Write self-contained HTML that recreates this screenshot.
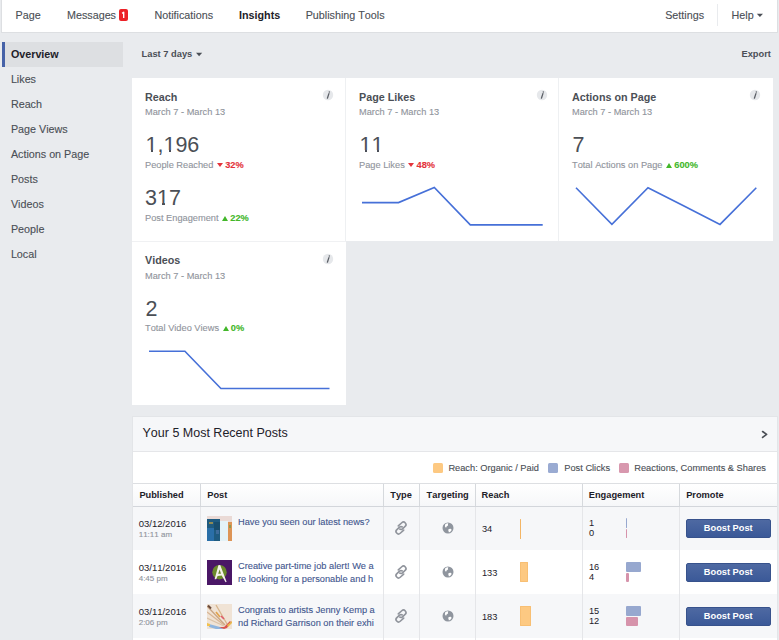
<!DOCTYPE html><html><head><meta charset="utf-8"><style>
*{margin:0;padding:0;box-sizing:border-box}
html,body{width:779px;height:640px;overflow:hidden;background:#e9ebee;font-family:"Liberation Sans",sans-serif;font-kerning:none}
.t{position:absolute;white-space:nowrap}
.s{-webkit-text-stroke:0.12px currentColor}
.r{position:absolute}
.t b{font-weight:700}
.arr{display:inline-block;width:0;height:0;border-left:3.9px solid transparent;border-right:3.9px solid transparent;vertical-align:baseline;margin:0 2.3px 0 0.9px}
.arr.dn{border-top:4.4px solid #e4333b;position:relative;top:-0.9px}
.arr.up{border-bottom:5px solid #42b72a;position:relative;top:0px}
.info{width:10.4px;height:10.4px;border-radius:50%;background:#e9ebee;text-align:center}
.info span{position:absolute;left:0;top:0;width:10.4px;height:10.4px;font:italic 700 8px/10.4px "Liberation Serif",serif;color:#4b4f56;text-align:center}
.thumb{width:25px;height:25px}
.th0{background:linear-gradient(90deg,#2f6ea0 0 45%,#c9d8de 45% 75%,#d59a52 75% 100%)}
.th1{background:#4f2a6e}
.th2{background:linear-gradient(135deg,#efe3d2,#e6d3bd 60%,#d27a5c)}
.globe{width:11px;height:11px;border-radius:50%;background:#90949c}
.btn{width:84.5px;height:18.5px;background:linear-gradient(#4e69a2,#3b5998);border:1px solid #37528c;border-radius:2px;color:#fff;font-weight:700;font-size:9.25px;line-height:16.5px;text-align:center}
</style></head><body>
<div class="r" style="left:1px;top:-1px;width:777px;height:34px;background:#fff;border:1px solid #dddfe2;"></div>
<div class="t s" style="left:15.50px;top:8.53px;font-size:10.75px;line-height:12.9px;color:#4b4f56;font-weight:400;">Page</div>
<div class="t s" style="left:67.00px;top:8.53px;font-size:10.75px;line-height:12.9px;color:#4b4f56;font-weight:400;">Messages</div>
<div class="r" style="left:119px;top:9px;width:9px;height:12px;background:#ec2127;border-radius:2px;"></div>
<svg class="r" style="left:119px;top:9px" width="9" height="12"><path d="M3.1 4.4 L4.7 3.2 L4.7 9.0" fill="none" stroke="#fff" stroke-width="1.35" stroke-linejoin="round"/></svg>
<div class="t s" style="left:154.50px;top:8.53px;font-size:10.75px;line-height:12.9px;color:#4b4f56;font-weight:400;">Notifications</div>
<div class="t" style="left:239.00px;top:8.53px;font-size:10.75px;line-height:12.9px;color:#1d2129;font-weight:700;">Insights</div>
<div class="t s" style="left:305.70px;top:8.53px;font-size:10.75px;line-height:12.9px;color:#4b4f56;font-weight:400;">Publishing Tools</div>
<div class="t s" style="left:665.20px;top:8.53px;font-size:10.75px;line-height:12.9px;color:#4b4f56;font-weight:400;">Settings</div>
<div class="r" style="left:717px;top:4px;width:1px;height:22px;background:#e9ebee;"></div>
<div class="t s" style="left:731.50px;top:8.53px;font-size:10.75px;line-height:12.9px;color:#4b4f56;font-weight:400;">Help</div>
<svg class="r" style="left:756px;top:13px" width="8" height="5"><path d="M0.8 0.8 L7 0.8 L3.9 4 Z" fill="#4b4f56"/></svg>
<div class="r" style="left:1.5px;top:42px;width:3.5px;height:25px;background:#4662a8;"></div>
<div class="r" style="left:5px;top:42px;width:118px;height:25px;background:#dddfe2;"></div>
<div class="t" style="left:10.90px;top:48.23px;font-size:10.75px;line-height:12.9px;color:#1d2129;font-weight:700;">Overview</div>
<div class="t s" style="left:10.90px;top:73.23px;font-size:10.75px;line-height:12.9px;color:#4b4f56;font-weight:400;">Likes</div>
<div class="t s" style="left:10.90px;top:98.23px;font-size:10.75px;line-height:12.9px;color:#4b4f56;font-weight:400;">Reach</div>
<div class="t s" style="left:10.90px;top:123.23px;font-size:10.75px;line-height:12.9px;color:#4b4f56;font-weight:400;">Page Views</div>
<div class="t s" style="left:10.90px;top:148.23px;font-size:10.75px;line-height:12.9px;color:#4b4f56;font-weight:400;">Actions on Page</div>
<div class="t s" style="left:10.90px;top:173.23px;font-size:10.75px;line-height:12.9px;color:#4b4f56;font-weight:400;">Posts</div>
<div class="t s" style="left:10.90px;top:198.23px;font-size:10.75px;line-height:12.9px;color:#4b4f56;font-weight:400;">Videos</div>
<div class="t s" style="left:10.90px;top:223.23px;font-size:10.75px;line-height:12.9px;color:#4b4f56;font-weight:400;">People</div>
<div class="t s" style="left:10.90px;top:248.23px;font-size:10.75px;line-height:12.9px;color:#4b4f56;font-weight:400;">Local</div>
<div class="t" style="left:141.60px;top:48.80px;font-size:9.3px;line-height:11.16px;color:#4b4f56;font-weight:700;">Last 7 days</div>
<svg class="r" style="left:196px;top:52px" width="7" height="5"><path d="M0 0.8 L6.2 0.8 L3.1 4.3 Z" fill="#4b4f56"/></svg>
<div class="t" style="left:741.50px;top:48.70px;font-size:9.3px;line-height:11.16px;color:#4b4f56;font-weight:700;">Export</div>
<div class="r" style="left:132px;top:78px;width:641px;height:163px;background:#eef0f2;"></div>
<div class="r" style="left:132px;top:78px;width:213px;height:163px;background:#fff;"></div>
<div class="r" style="left:346px;top:78px;width:212px;height:163px;background:#fff;"></div>
<div class="r" style="left:559px;top:78px;width:214px;height:163px;background:#fff;"></div>
<div class="r" style="left:132px;top:242px;width:214px;height:163px;background:#fff;"></div>
<div class="r" style="left:132px;top:241px;width:214px;height:1px;background:#f0f1f3;"></div>
<div class="t" style="left:145.00px;top:90.83px;font-size:10.75px;line-height:12.9px;color:#4b4f56;font-weight:700;">Reach</div>
<div class="t s" style="left:145.00px;top:107.14px;font-size:9.25px;line-height:11.1px;color:#90949c;font-weight:400;">March 7 - March 13</div>
<div class="t" style="left:145.50px;top:133.25px;font-size:21.5px;line-height:25.8px;color:#4b4f56;font-weight:400;">1,196</div>
<div class="t s" style="left:145.00px;top:159.64px;font-size:9.25px;line-height:11.1px;color:#90949c;font-weight:400;">People Reached <span class="arr dn"></span><b style="color:#e4333b">32%</b></div>
<div class="t" style="left:145.00px;top:186.05px;font-size:21.5px;line-height:25.8px;color:#4b4f56;font-weight:400;">317</div>
<div class="t s" style="left:145.00px;top:212.64px;font-size:9.25px;line-height:11.1px;color:#90949c;font-weight:400;">Post Engagement <span class="arr up"></span><b style="color:#42b72a">22%</b></div>
<svg class="r" style="left:322.2px;top:89.3px" width="12" height="12" viewBox="0 0 12 12"><circle cx="6" cy="6" r="5.2" fill="#e6e8eb"/><path d="M6.9 4.6 L5.4 9.2" stroke="#5b5f66" stroke-width="1.3" stroke-linecap="round"/><circle cx="7.3" cy="3.0" r="0.75" fill="#5b5f66"/></svg>
<div class="t" style="left:359.00px;top:90.83px;font-size:10.75px;line-height:12.9px;color:#4b4f56;font-weight:700;">Page Likes</div>
<div class="t s" style="left:359.00px;top:107.14px;font-size:9.25px;line-height:11.1px;color:#90949c;font-weight:400;">March 7 - March 13</div>
<div class="t" style="left:359.50px;top:133.25px;font-size:21.5px;line-height:25.8px;color:#4b4f56;font-weight:400;">11</div>
<div class="t s" style="left:359.00px;top:159.64px;font-size:9.25px;line-height:11.1px;color:#90949c;font-weight:400;">Page Likes <span class="arr dn"></span><b style="color:#e4333b">48%</b></div>
<svg class="r" style="left:536.0px;top:89.3px" width="12" height="12" viewBox="0 0 12 12"><circle cx="6" cy="6" r="5.2" fill="#e6e8eb"/><path d="M6.9 4.6 L5.4 9.2" stroke="#5b5f66" stroke-width="1.3" stroke-linecap="round"/><circle cx="7.3" cy="3.0" r="0.75" fill="#5b5f66"/></svg>
<div class="t" style="left:572.00px;top:90.83px;font-size:10.75px;line-height:12.9px;color:#4b4f56;font-weight:700;">Actions on Page</div>
<div class="t s" style="left:572.00px;top:107.14px;font-size:9.25px;line-height:11.1px;color:#90949c;font-weight:400;">March 7 - March 13</div>
<div class="t" style="left:572.50px;top:133.25px;font-size:21.5px;line-height:25.8px;color:#4b4f56;font-weight:400;">7</div>
<div class="t s" style="left:572.00px;top:159.64px;font-size:9.25px;line-height:11.1px;color:#90949c;font-weight:400;">Total Actions on Page <span class="arr up"></span><b style="color:#42b72a">600%</b></div>
<svg class="r" style="left:748.8px;top:89.3px" width="12" height="12" viewBox="0 0 12 12"><circle cx="6" cy="6" r="5.2" fill="#e6e8eb"/><path d="M6.9 4.6 L5.4 9.2" stroke="#5b5f66" stroke-width="1.3" stroke-linecap="round"/><circle cx="7.3" cy="3.0" r="0.75" fill="#5b5f66"/></svg>
<div class="t" style="left:145.00px;top:254.33px;font-size:10.75px;line-height:12.9px;color:#4b4f56;font-weight:700;">Videos</div>
<div class="t s" style="left:145.00px;top:270.64px;font-size:9.25px;line-height:11.1px;color:#90949c;font-weight:400;">March 7 - March 13</div>
<div class="t" style="left:145.50px;top:296.75px;font-size:21.5px;line-height:25.8px;color:#4b4f56;font-weight:400;">2</div>
<div class="t s" style="left:145.00px;top:323.14px;font-size:9.25px;line-height:11.1px;color:#90949c;font-weight:400;">Total Video Views <span class="arr up"></span><b style="color:#42b72a">0%</b></div>
<svg class="r" style="left:322.2px;top:252.8px" width="12" height="12" viewBox="0 0 12 12"><circle cx="6" cy="6" r="5.2" fill="#e6e8eb"/><path d="M6.9 4.6 L5.4 9.2" stroke="#5b5f66" stroke-width="1.3" stroke-linecap="round"/><circle cx="7.3" cy="3.0" r="0.75" fill="#5b5f66"/></svg>
<div class="r" style="left:146px;top:150px;width:5px;height:2px;background:#fff;"></div>
<div class="r" style="left:153px;top:150px;width:5px;height:2px;background:#fff;"></div>
<div class="r" style="left:164px;top:150px;width:5px;height:2px;background:#fff;"></div>
<div class="r" style="left:171px;top:150px;width:5px;height:2px;background:#fff;"></div>
<div class="r" style="left:360px;top:150px;width:5px;height:2px;background:#fff;"></div>
<div class="r" style="left:367px;top:150px;width:5px;height:2px;background:#fff;"></div>
<div class="r" style="left:372px;top:150px;width:5px;height:2px;background:#fff;"></div>
<div class="r" style="left:379px;top:150px;width:5px;height:2px;background:#fff;"></div>
<div class="r" style="left:157px;top:203px;width:5px;height:2px;background:#fff;"></div>
<div class="r" style="left:165px;top:203px;width:5px;height:2px;background:#fff;"></div>
<svg class="r" style="left:0;top:0" width="779" height="640"><g fill="none" stroke="#4670d8" stroke-width="1.6" stroke-linejoin="miter"><polyline points="362,202.6 398.5,202.6 434.3,187.4 470.3,224.9 542.7,224.9"/><polyline points="576,187.7 611.9,224.4 648,187.7 684,206 720,224.4 756.3,187.7"/><polyline points="149,351.2 184.9,351.2 220.9,388.5 329.5,388.5"/></g></svg>
<div class="r" style="left:132px;top:416px;width:646px;height:260px;background:#fff;border:1px solid #e3e5e8;"></div>
<div class="r" style="left:133px;top:417px;width:644px;height:35px;background:#f6f7f9;border-bottom:1px solid #e5e6e9;"></div>
<div class="t" style="left:142.50px;top:426.07px;font-size:12.5px;line-height:15.0px;color:#1d2129;font-weight:400;">Your 5 Most Recent Posts</div>
<svg class="r" style="left:760px;top:429px" width="10" height="11"><path d="M2.6 2.5 L6.6 5.4 L2.6 8.4" fill="none" stroke="#4b4f56" stroke-width="1.65" stroke-linecap="round" stroke-linejoin="round"/></svg>
<div class="r" style="left:433px;top:463px;width:10px;height:10px;background:#fdc982;border-radius:1.5px;"></div>
<div class="t s" style="left:448.40px;top:462.54px;font-size:9.25px;line-height:11.1px;color:#4b4f56;font-weight:400;">Reach: Organic / Paid</div>
<div class="r" style="left:548.4px;top:463px;width:10px;height:10px;background:#9aabd2;border-radius:1.5px;"></div>
<div class="t s" style="left:564.30px;top:462.54px;font-size:9.25px;line-height:11.1px;color:#4b4f56;font-weight:400;">Post Clicks</div>
<div class="r" style="left:619.2px;top:463px;width:10px;height:10px;background:#d898ae;border-radius:1.5px;"></div>
<div class="t s" style="left:634.30px;top:462.54px;font-size:9.25px;line-height:11.1px;color:#4b4f56;font-weight:400;">Reactions, Comments &amp; Shares</div>
<div class="r" style="left:133px;top:483px;width:644px;height:24px;background:linear-gradient(#fff,#f6f7f9);border-top:1px solid #dddfe2;border-bottom:1px solid #d3d6db;"></div>
<div class="t" style="left:139.40px;top:490.14px;font-size:9.25px;line-height:11.1px;color:#1d2129;font-weight:700;">Published</div>
<div class="t" style="left:207.30px;top:490.14px;font-size:9.25px;line-height:11.1px;color:#1d2129;font-weight:700;">Post</div>
<div class="t" style="left:390.30px;top:490.14px;font-size:9.25px;line-height:11.1px;color:#1d2129;font-weight:700;">Type</div>
<div class="t" style="left:426.60px;top:490.14px;font-size:9.25px;line-height:11.1px;color:#1d2129;font-weight:700;">Targeting</div>
<div class="t" style="left:481.60px;top:490.14px;font-size:9.25px;line-height:11.1px;color:#1d2129;font-weight:700;">Reach</div>
<div class="t" style="left:588.80px;top:490.14px;font-size:9.25px;line-height:11.1px;color:#1d2129;font-weight:700;">Engagement</div>
<div class="t" style="left:686.20px;top:490.14px;font-size:9.25px;line-height:11.1px;color:#1d2129;font-weight:700;">Promote</div>
<div class="r" style="left:133px;top:507px;width:644px;height:43px;background:#f6f7f9;"></div>
<div class="r" style="left:133px;top:550px;width:644px;height:44px;background:#fff;"></div>
<div class="r" style="left:133px;top:594px;width:644px;height:44px;background:#f6f7f9;"></div>
<div class="r" style="left:200px;top:484px;width:1px;height:22px;background:#d6d9dd;"></div>
<div class="r" style="left:200px;top:507px;width:1px;height:133px;background:#e5e6e9;"></div>
<div class="r" style="left:383px;top:484px;width:1px;height:22px;background:#d6d9dd;"></div>
<div class="r" style="left:383px;top:507px;width:1px;height:133px;background:#e5e6e9;"></div>
<div class="r" style="left:419px;top:484px;width:1px;height:22px;background:#d6d9dd;"></div>
<div class="r" style="left:419px;top:507px;width:1px;height:133px;background:#e5e6e9;"></div>
<div class="r" style="left:475px;top:484px;width:1px;height:22px;background:#d6d9dd;"></div>
<div class="r" style="left:475px;top:507px;width:1px;height:133px;background:#e5e6e9;"></div>
<div class="r" style="left:582px;top:484px;width:1px;height:22px;background:#d6d9dd;"></div>
<div class="r" style="left:582px;top:507px;width:1px;height:133px;background:#e5e6e9;"></div>
<div class="r" style="left:679px;top:484px;width:1px;height:22px;background:#d6d9dd;"></div>
<div class="r" style="left:679px;top:507px;width:1px;height:133px;background:#e5e6e9;"></div>
<div class="t" style="left:138.70px;top:517.81px;font-size:9.5px;line-height:11.4px;color:#1d2129;font-weight:400;">03/12/2016</div>
<div class="t s" style="left:138.70px;top:529.93px;font-size:8.0px;line-height:9.6px;color:#90949c;font-weight:400;">11:11 am</div>
<svg class="r" style="left:207px;top:516.0px" width="25" height="25" viewBox="0 0 25 25"><rect width="25" height="25" fill="#eadad6"/><rect x="0" y="3" width="13" height="22" fill="#1f5b80"/><rect x="0" y="12" width="7" height="13" fill="#2a6fa8"/><rect x="7" y="6" width="6" height="8" fill="#184e6e"/><rect x="2" y="6" width="4" height="2" fill="#8f8a55"/><rect x="9" y="14" width="3" height="4" fill="#3d6b9a"/><rect x="13" y="5" width="8" height="20" fill="#e4f2f8"/><rect x="21" y="6" width="4" height="19" fill="#dd9456"/><rect x="22" y="9" width="2" height="3" fill="#8f9b52"/></svg>
<div class="t s" style="left:238.00px;top:517.44px;font-size:9.25px;line-height:11.1px;color:#43578f;font-weight:400;">Have you seen our latest news?</div>
<svg class="r" style="left:392px;top:519.2px" width="18" height="18" viewBox="0 0 18 18"><g fill="none" stroke="#90949c" stroke-width="1.6" stroke-linecap="round" transform="rotate(-42 9 9)"><path d="M9.6 12.4 H4.9 A2.5 2.5 0 0 1 4.9 7.4 H8.4 A2.5 2.5 0 0 1 10.7 9.1"/><path d="M8.4 5.6 H13.1 A2.5 2.5 0 0 1 13.1 10.6 H9.6 A2.5 2.5 0 0 1 7.3 8.9"/></g></svg>
<svg class="r" style="left:441.5px;top:522.4px" width="12" height="12" viewBox="0 0 12 12"><circle cx="6" cy="6" r="5.5" fill="#8f959e"/><path d="M3.2 2.2 Q4.6 1.2 6.3 1.3 L5.9 2.6 Q6.6 3.2 5.4 3.9 L4.6 4.6 L4.1 5.8 Q3.3 5.3 2.9 4.2 Z" fill="#fff"/><path d="M6.6 7.1 L8.9 6.8 Q9.8 7.4 9.4 8.6 Q8.4 10.2 6.9 10.6 Q6.8 9.6 6.3 8.8 Z" fill="#fff"/></svg>
<div class="t" style="left:481.90px;top:523.74px;font-size:9.25px;line-height:11.1px;color:#1d2129;font-weight:400;">34</div>
<div class="r" style="left:519.8px;top:518.5px;width:1.6px;height:20px;background:#fdc982;border-radius:1px;box-shadow:inset 0 0 0 0.5px #f3b565;"></div>
<div class="t" style="left:588.90px;top:518.04px;font-size:9.25px;line-height:11.1px;color:#1d2129;font-weight:400;">1</div>
<div class="t" style="left:588.90px;top:528.44px;font-size:9.25px;line-height:11.1px;color:#1d2129;font-weight:400;">0</div>
<div class="r" style="left:626px;top:518.4px;width:1px;height:9.4px;background:#97a8cf;border-radius:1px;"></div>
<div class="r" style="left:626px;top:529.0px;width:1px;height:9.4px;background:#d693ab;border-radius:1px;"></div>
<div class="r btn" style="left:686px;top:519.3px">Boost Post</div>
<div class="t" style="left:138.70px;top:561.71px;font-size:9.5px;line-height:11.4px;color:#1d2129;font-weight:400;">03/11/2016</div>
<div class="t s" style="left:138.70px;top:573.83px;font-size:8.0px;line-height:9.6px;color:#90949c;font-weight:400;">4:45 pm</div>
<svg class="r" style="left:207px;top:559.9px" width="25" height="25" viewBox="0 0 25 25"><rect width="25" height="25" fill="#4a1766"/><circle cx="12.5" cy="12.2" r="7.2" fill="#6b8a2b"/><path d="M11.4 5.2 L13.2 4.9 L19.6 21.7 L18.6 22.2 L14.7 15.6 L10.6 15.9 L9.2 19.3 L7.6 19.3 Z M11.2 13.8 L14 13.7 L12.6 9.6 Z" fill="#f4f1ea"/></svg>
<div class="t s" style="left:238.00px;top:560.84px;font-size:9.25px;line-height:11.1px;color:#43578f;font-weight:400;">Creative part-time job alert! We a</div>
<div class="t s" style="left:238.00px;top:574.04px;font-size:9.25px;line-height:11.1px;color:#43578f;font-weight:400;">re looking for a personable and h</div>
<svg class="r" style="left:392px;top:563.1px" width="18" height="18" viewBox="0 0 18 18"><g fill="none" stroke="#90949c" stroke-width="1.6" stroke-linecap="round" transform="rotate(-42 9 9)"><path d="M9.6 12.4 H4.9 A2.5 2.5 0 0 1 4.9 7.4 H8.4 A2.5 2.5 0 0 1 10.7 9.1"/><path d="M8.4 5.6 H13.1 A2.5 2.5 0 0 1 13.1 10.6 H9.6 A2.5 2.5 0 0 1 7.3 8.9"/></g></svg>
<svg class="r" style="left:441.5px;top:566.3px" width="12" height="12" viewBox="0 0 12 12"><circle cx="6" cy="6" r="5.5" fill="#8f959e"/><path d="M3.2 2.2 Q4.6 1.2 6.3 1.3 L5.9 2.6 Q6.6 3.2 5.4 3.9 L4.6 4.6 L4.1 5.8 Q3.3 5.3 2.9 4.2 Z" fill="#fff"/><path d="M6.6 7.1 L8.9 6.8 Q9.8 7.4 9.4 8.6 Q8.4 10.2 6.9 10.6 Q6.8 9.6 6.3 8.8 Z" fill="#fff"/></svg>
<div class="t" style="left:481.90px;top:567.64px;font-size:9.25px;line-height:11.1px;color:#1d2129;font-weight:400;">133</div>
<div class="r" style="left:519.8px;top:562.4px;width:8px;height:20px;background:#fdc982;border-radius:1px;box-shadow:inset 0 0 0 0.5px #f3b565;"></div>
<div class="t" style="left:588.90px;top:561.94px;font-size:9.25px;line-height:11.1px;color:#1d2129;font-weight:400;">16</div>
<div class="t" style="left:588.90px;top:572.34px;font-size:9.25px;line-height:11.1px;color:#1d2129;font-weight:400;">4</div>
<div class="r" style="left:626px;top:562.3px;width:15px;height:9.4px;background:#97a8cf;border-radius:1px;"></div>
<div class="r" style="left:626px;top:572.9px;width:2.8px;height:9.4px;background:#d693ab;border-radius:1px;"></div>
<div class="r btn" style="left:686px;top:563.2px">Boost Post</div>
<div class="t" style="left:138.70px;top:605.61px;font-size:9.5px;line-height:11.4px;color:#1d2129;font-weight:400;">03/11/2016</div>
<div class="t s" style="left:138.70px;top:617.73px;font-size:8.0px;line-height:9.6px;color:#90949c;font-weight:400;">2:06 pm</div>
<svg class="r" style="left:207px;top:603.8px" width="25" height="25" viewBox="0 0 25 25"><rect width="25" height="25" fill="#f0e3d5"/><g stroke-width="1.3" fill="none"><path d="M0 2 L18 21" stroke="#c9a585"/><path d="M0 8 L17 21" stroke="#d8b594"/><path d="M0 14 L17 22" stroke="#dcc3a8"/><path d="M9 1 L20 20" stroke="#d7b48b"/><path d="M1 1.5 L4 4.5" stroke="#6a4a3a" stroke-width="2"/><path d="M9 8 L13 13" stroke="#e2a24a" stroke-width="1.6"/><path d="M14 12 L17 15" stroke="#e05a6a" stroke-width="1.6"/></g><path d="M2 20 L13 23 L17 25 L9 25 L2 23 Z" fill="#8fb5de"/><path d="M12 23 L17 25 L20 24 L24 18 L23 17 L17 23 Z" fill="#d9534f"/><path d="M0 19 L3 20 L3 22 L0 22 Z" fill="#f2c14e"/><path d="M20 21 L25 17 L25 19 L21 23 Z" fill="#e8b84a"/></svg>
<div class="t s" style="left:238.00px;top:604.74px;font-size:9.25px;line-height:11.1px;color:#43578f;font-weight:400;">Congrats to artists Jenny Kemp a</div>
<div class="t s" style="left:238.00px;top:617.94px;font-size:9.25px;line-height:11.1px;color:#43578f;font-weight:400;">nd Richard Garrison on their exhi</div>
<svg class="r" style="left:392px;top:607.0px" width="18" height="18" viewBox="0 0 18 18"><g fill="none" stroke="#90949c" stroke-width="1.6" stroke-linecap="round" transform="rotate(-42 9 9)"><path d="M9.6 12.4 H4.9 A2.5 2.5 0 0 1 4.9 7.4 H8.4 A2.5 2.5 0 0 1 10.7 9.1"/><path d="M8.4 5.6 H13.1 A2.5 2.5 0 0 1 13.1 10.6 H9.6 A2.5 2.5 0 0 1 7.3 8.9"/></g></svg>
<svg class="r" style="left:441.5px;top:610.2px" width="12" height="12" viewBox="0 0 12 12"><circle cx="6" cy="6" r="5.5" fill="#8f959e"/><path d="M3.2 2.2 Q4.6 1.2 6.3 1.3 L5.9 2.6 Q6.6 3.2 5.4 3.9 L4.6 4.6 L4.1 5.8 Q3.3 5.3 2.9 4.2 Z" fill="#fff"/><path d="M6.6 7.1 L8.9 6.8 Q9.8 7.4 9.4 8.6 Q8.4 10.2 6.9 10.6 Q6.8 9.6 6.3 8.8 Z" fill="#fff"/></svg>
<div class="t" style="left:481.90px;top:611.54px;font-size:9.25px;line-height:11.1px;color:#1d2129;font-weight:400;">183</div>
<div class="r" style="left:519.8px;top:606.3px;width:11.6px;height:20px;background:#fdc982;border-radius:1px;box-shadow:inset 0 0 0 0.5px #f3b565;"></div>
<div class="t" style="left:588.90px;top:605.84px;font-size:9.25px;line-height:11.1px;color:#1d2129;font-weight:400;">15</div>
<div class="t" style="left:588.90px;top:616.24px;font-size:9.25px;line-height:11.1px;color:#1d2129;font-weight:400;">12</div>
<div class="r" style="left:626px;top:606.2px;width:14.5px;height:9.4px;background:#97a8cf;border-radius:1px;"></div>
<div class="r" style="left:626px;top:616.8px;width:12px;height:9.4px;background:#d693ab;border-radius:1px;"></div>
<div class="r btn" style="left:686px;top:607.1px">Boost Post</div>
</body></html>
